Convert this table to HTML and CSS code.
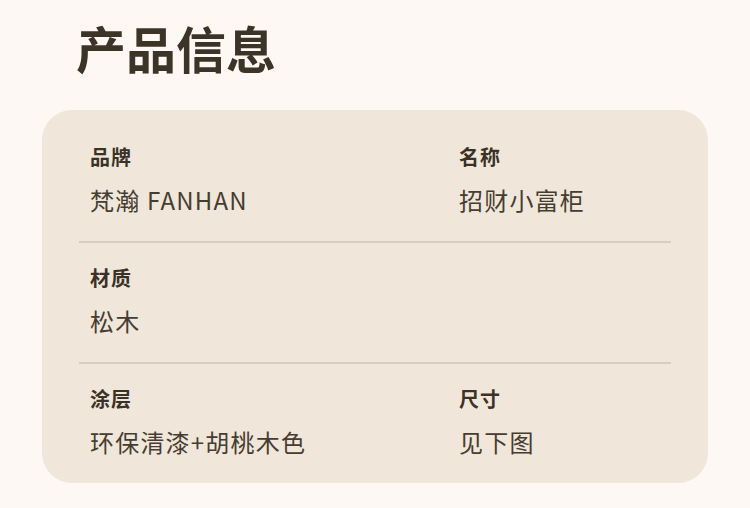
FILE: index.html
```html
<!DOCTYPE html>
<html lang="zh-CN">
<head>
<meta charset="utf-8">
<title>产品信息</title>
<link rel="stylesheet" href="styles.css">
</head>
<body>
<main class="page">
  <h1 class="title">产品信息</h1>
  <section class="card">
    <div class="row">
      <div class="field">
        <div class="label">品牌</div>
        <div class="value">梵瀚 FANHAN</div>
      </div>
      <div class="field">
        <div class="label">名称</div>
        <div class="value">招财小富柜</div>
      </div>
    </div>
    <div class="row">
      <div class="field">
        <div class="label">材质</div>
        <div class="value">松木</div>
      </div>
    </div>
    <div class="row">
      <div class="field">
        <div class="label">涂层</div>
        <div class="value">环保清漆+胡桃木色</div>
      </div>
      <div class="field">
        <div class="label">尺寸</div>
        <div class="value">见下图</div>
      </div>
    </div>
  </section>
</main>
</body>
</html>
```

FILE: styles.css
```css
* { box-sizing: border-box; }
html, body {
  margin: 0;
  padding: 0;
  background: #fdf8f3;
}
body {
  font-family: "Noto Sans CJK SC", "Noto Sans", sans-serif;
  color: #3b3327;
}
.page {
  padding: 22px 42px 0;
  width: 750px;
}
.title {
  margin: 0 0 38px 34px;
  font-size: 50px;
  line-height: 50px;
  font-weight: 700;
  color: #3d3428;
  letter-spacing: 0;
}
.card {
  width: 666px;
  height: 373px;
  background: #f0e7da;
  border-radius: 30px;
  padding: 12px 37px 0;
}
.row {
  display: grid;
  grid-template-columns: 369px 1fr;
  padding: 25px 11px 29px;
}
.row + .row {
  border-top: 2px solid #d7cec2;
}
.label {
  font-size: 20px;
  line-height: 20px;
  font-weight: 700;
  letter-spacing: 1px;
  color: #3a3226;
}
.value {
  margin-top: 21px;
  font-size: 24px;
  line-height: 24px;
  font-weight: 400;
  letter-spacing: 1.2px;
  color: #463d32;
}
```
